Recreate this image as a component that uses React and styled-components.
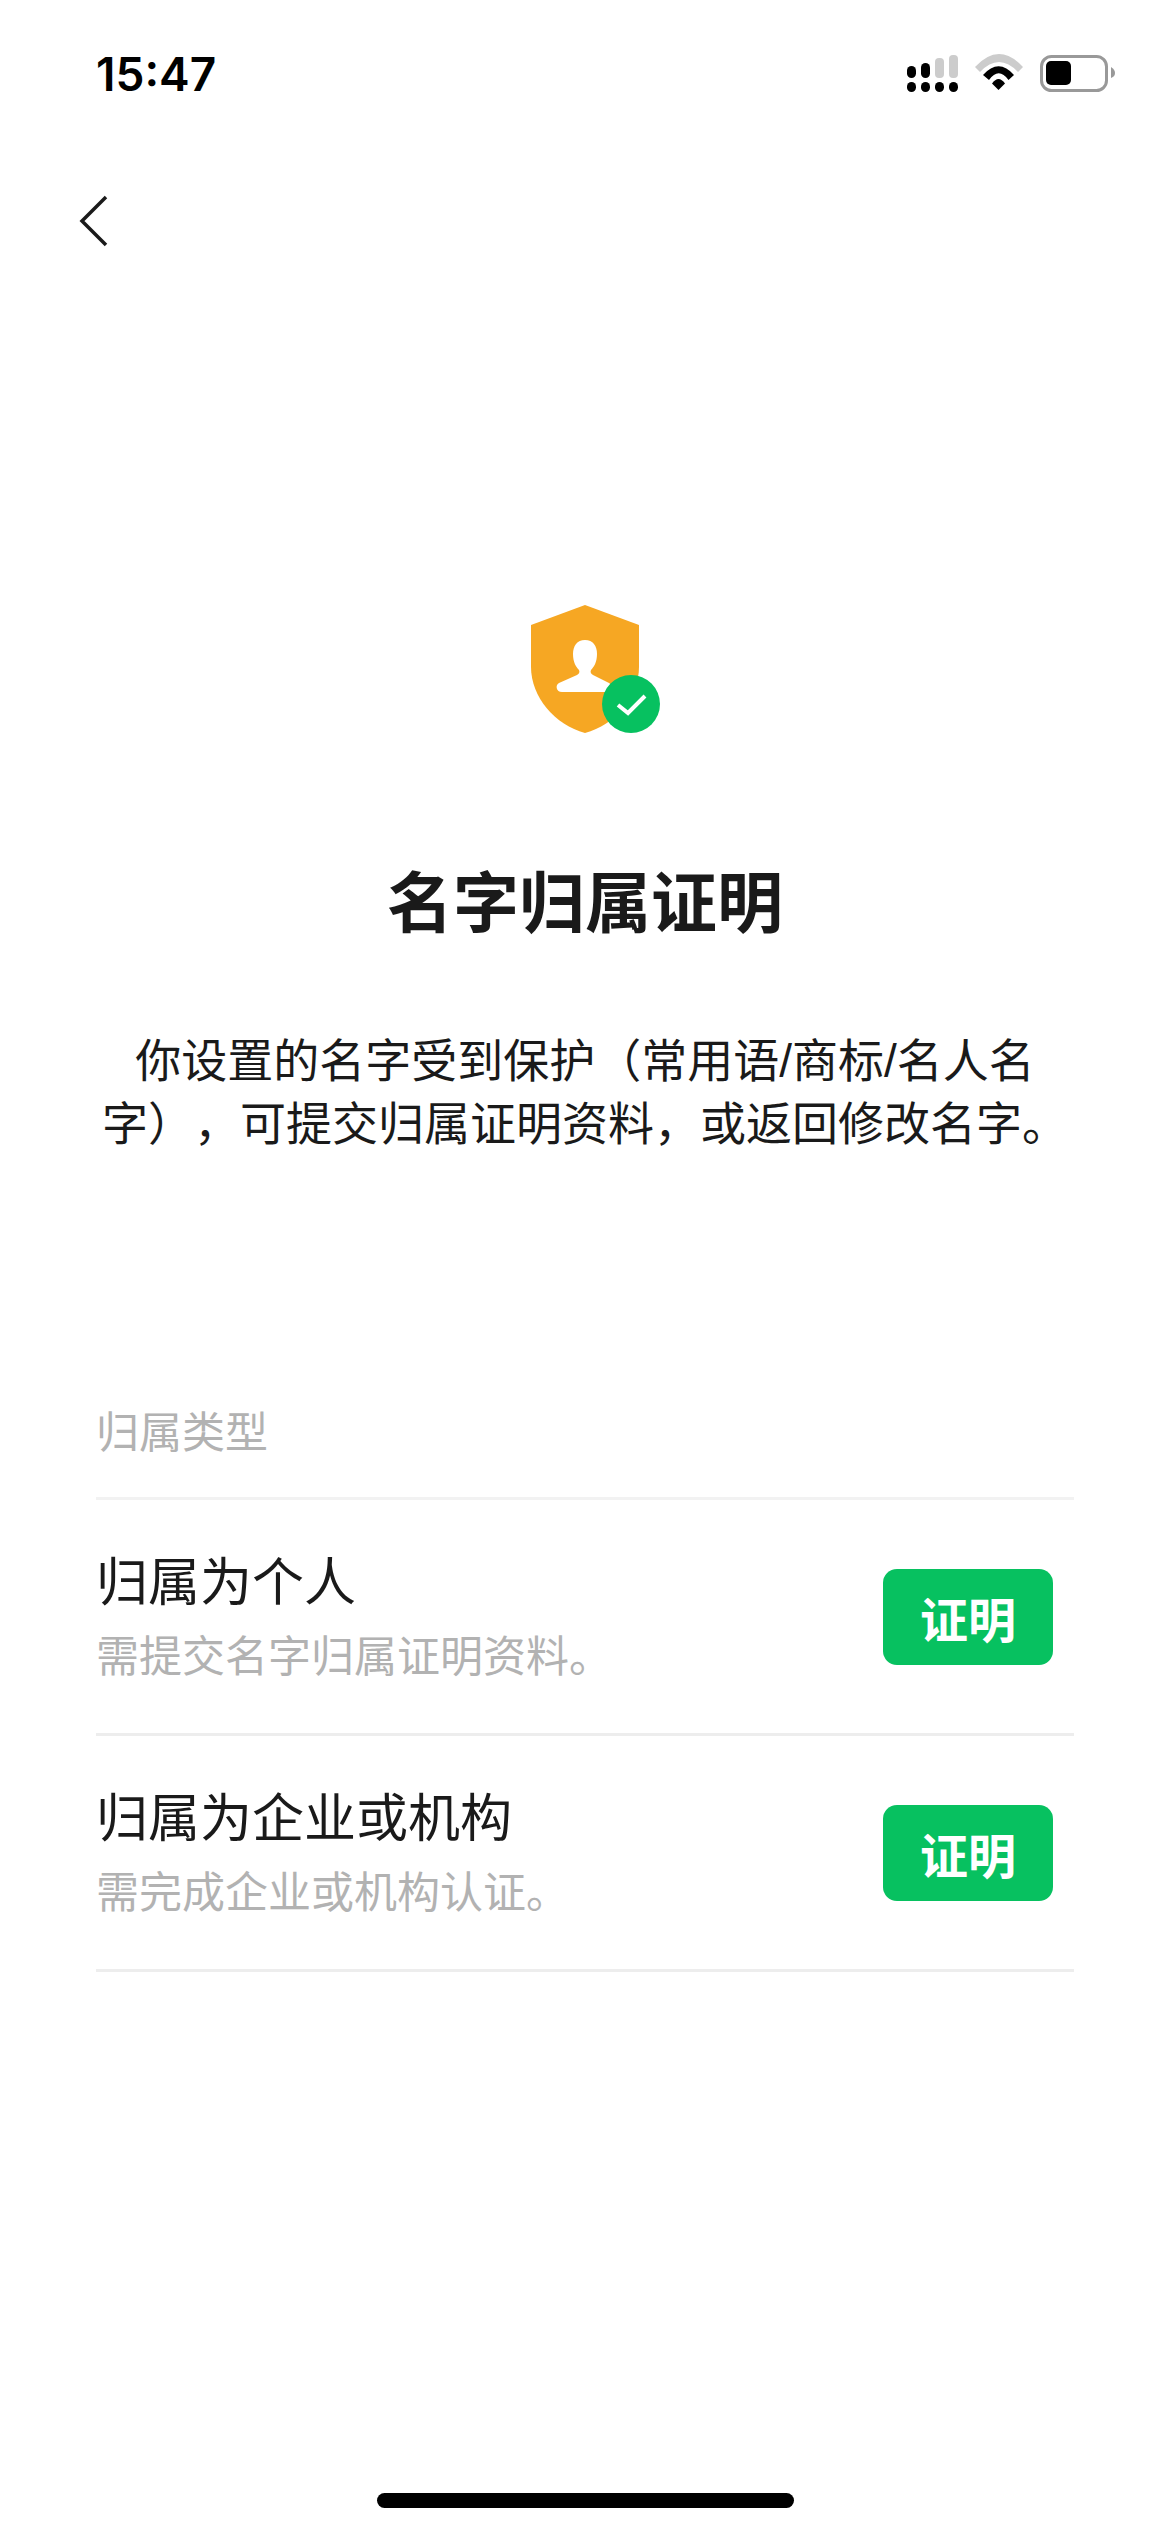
import styled, { createGlobalStyle } from "styled-components";

const GlobalStyle = createGlobalStyle`
  html, body {
    margin: 0;
    padding: 0;
    background: #fff;
  }
`;

const cjk = `"Liberation Sans", "Noto Sans CJK SC", sans-serif`;

const Screen = styled.div`
  position: relative;
  width: 1170px;
  height: 2532px;
  background: #fff;
  font-family: ${cjk};
  overflow: hidden;
  text-spacing-trim: space-all;
`;

const StatusBar = styled.div`
  display: flex;
  align-items: center;
  justify-content: space-between;
  height: 60px;
  padding: 44px 55px 0 96px;
`;

const Time = styled.div`
  font-family: "Inter", "Liberation Sans", sans-serif;
  font-size: 46px;
  font-weight: 600;
  line-height: 60px;
  color: #000;
`;

const BackRow = styled.div`
  display: flex;
  padding: 91px 0 0 79px;
  height: 52px;
`;

const Hero = styled.div`
  display: flex;
  flex-direction: column;
  align-items: center;
  padding-top: 358px;
`;

const BadgeSvg = styled.svg`
  display: block;
  overflow: visible;
`;

const Title = styled.h1`
  margin: 126px 0 0;
  font-size: 66px;
  font-weight: 700;
  line-height: 90px;
  color: #1a1a1a;
`;

const Desc = styled.p`
  margin: 81px 0 0;
  font-size: 46px;
  line-height: 63px;
  text-align: center;
  color: #1a1a1a;
  white-space: nowrap;
`;

const Section = styled.div`
  margin: 247px 96px 0;
`;

const SectionLabel = styled.div`
  font-size: 43px;
  line-height: 60px;
  height: 94px;
  color: #b2b2b2;
  border-bottom: 3px solid #f2f2f2;
`;

const Row = styled.div`
  display: flex;
  align-items: center;
  justify-content: space-between;
  height: 233px;
  padding-right: 21px;
  border-bottom: 3px solid #ededed;
`;

const RowText = styled.div`
  display: flex;
  flex-direction: column;
`;

const RowName = styled.div`
  font-size: 52px;
  line-height: 70px;
  color: #1a1a1a;
`;

const RowHint = styled.div`
  margin-top: 11px;
  font-size: 43px;
  line-height: 56px;
  color: #b2b2b2;
`;

const ProveButton = styled.button`
  width: 170px;
  height: 96px;
  border: 0;
  border-radius: 14px;
  padding: 0;
  background: #07c160;
  color: #fff;
  font-family: inherit;
  font-size: 48px;
  font-weight: 700;
`;

const HomeBar = styled.div`
  position: absolute;
  left: 377px;
  bottom: 24px;
  width: 417px;
  height: 15px;
  border-radius: 8px;
  background: #000;
`;

const StatusIcons = () => (
  <svg width="208" height="40" viewBox="0 0 208 40">
    {/* signal */}
    <g fill="#ccc">
      <rect x="28" y="4" width="9" height="20" rx="4" />
      <rect x="42" y="1" width="9" height="23" rx="4" />
    </g>
    <g fill="#000">
      <rect x="0" y="12" width="9" height="12" rx="4.5" />
      <rect x="14" y="9" width="9" height="15" rx="4.5" />
      <rect x="0" y="28" width="9" height="10" rx="4.5" />
      <rect x="14" y="28" width="9" height="10" rx="4.5" />
      <rect x="28" y="28" width="9" height="10" rx="4.5" />
      <rect x="42" y="28" width="9" height="10" rx="4.5" />
    </g>
    {/* wifi */}
    <g transform="translate(68 0)">
      <path d="M0 13 Q24 -13 48 13 L43 18 Q24 -2 5 18 Z" fill="#ccc" />
      <path d="M8 21 Q23.7 3.6 39 21 L33.5 26 Q23.7 12.6 14 26 Z" fill="#000" />
      <path d="M17 29.5 Q23.5 20.5 30 29.5 L23.5 36 Z" fill="#000" />
    </g>
    {/* battery */}
    <rect x="134.5" y="2.5" width="65" height="34" rx="10" fill="none" stroke="#999" strokeWidth="3" />
    <rect x="139" y="7" width="25" height="24" rx="5" fill="#000" />
    <path d="M204 13 C207 15 208 17 208 19 C208 21 207 23 204 24 Z" fill="#999" />
  </svg>
);

const BackIcon = () => (
  <svg width="32" height="52" viewBox="0 0 32 52">
    <path d="M27 2 L3 26 L27 50" fill="none" stroke="#1a1a1a" strokeWidth="3.5" />
  </svg>
);

const ShieldBadge = () => (
  <BadgeSvg width="108" height="128" viewBox="0 0 108 128">
    <path d="M54 0 L108 20 V62 C108 92 84 120 54 128 C24 120 0 92 0 62 V20 Z" fill="#f6a723" />
    <path d="M54 35 C62 35 66 41 66 49 C66 57 63 62 60 65 C59 67 60 69 62 70 L78 78 C82 80 82 87 76 87 H31 C25 87 24 80 28 78 L46 70 C48 69 49 67 48 65 C45 62 42 57 42 49 C42 41 46 35 54 35 Z" fill="#fff" />
    <circle cx="100" cy="99" r="29" fill="#07c160" />
    <path d="M87 100 L97 108 L114 91" fill="none" stroke="#fff" strokeWidth="4" />
  </BadgeSvg>
);

const items = [
  { name: "归属为个人", hint: "需提交名字归属证明资料。" },
  { name: "归属为企业或机构", hint: "需完成企业或机构认证。" },
];

export default function App() {
  return (
    <Screen>
      <GlobalStyle />
      <StatusBar>
        <Time>15:47</Time>
        <StatusIcons />
      </StatusBar>
      <BackRow>
        <BackIcon />
      </BackRow>
      <Hero>
        <ShieldBadge />
        <Title>名字归属证明</Title>
        <Desc>
          你设置的名字受到保护（常用语/商标/名人名
          <br />
          字），可提交归属证明资料，或返回修改名字。
        </Desc>
      </Hero>
      <Section>
        <SectionLabel>归属类型</SectionLabel>
        {items.map((item) => (
          <Row key={item.name}>
            <RowText>
              <RowName>{item.name}</RowName>
              <RowHint>{item.hint}</RowHint>
            </RowText>
            <ProveButton>证明</ProveButton>
          </Row>
        ))}
      </Section>
      <HomeBar />
    </Screen>
  );
}
